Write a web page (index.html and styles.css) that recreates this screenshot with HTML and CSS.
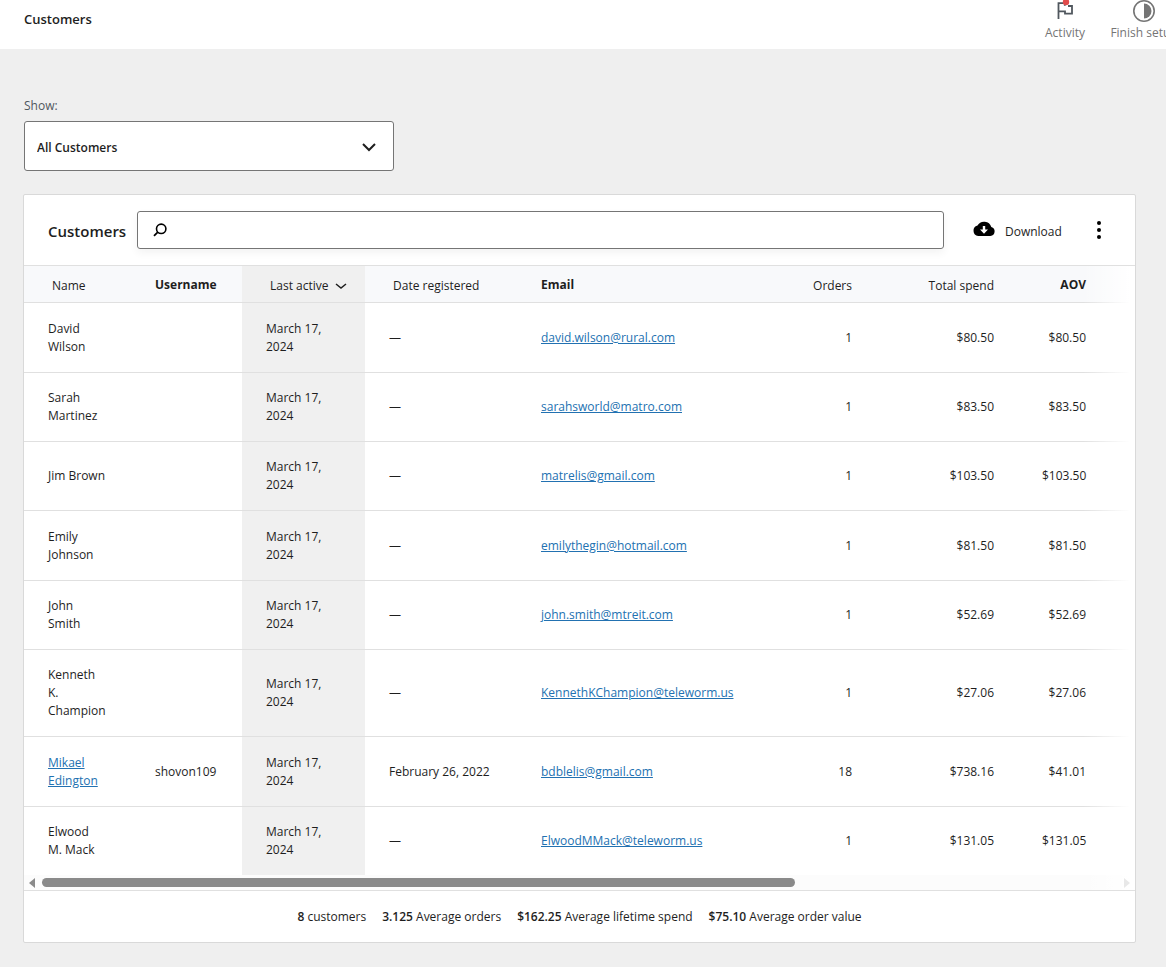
FILE: index.html
```html
<!DOCTYPE html>
<html lang="en">
<head>
<meta charset="utf-8">
<meta name="viewport" content="width=device-width, initial-scale=1">
<title>Customers</title>
<link rel="stylesheet" href="styles.css">
</head>
<body>
<header class="topbar">
  <h1 class="topbar-title">Customers</h1>
  <nav class="topbar-tabs" aria-label="Store activity">
    <button class="tab" type="button">
      <svg class="tab-icon" viewBox="0 0 24 24" aria-hidden="true">
        <path d="M5.500 20V4.200h6.300v2.500M5.500 12.400h6.500v2.300h7V7h-4" fill="none" stroke="#50575e" stroke-width="1.800"/>
        <circle cx="13" cy="3" r="3.200" fill="#e14b4b"/>
      </svg>
      <span>Activity</span>
    </button>
    <button class="tab" type="button">
      <svg class="tab-icon" viewBox="0 0 24 24" aria-hidden="true">
        <circle cx="12" cy="12" r="10.200" fill="none" stroke="#757575" stroke-width="1.600"/>
        <path d="M12 4.500a7.500 7.500 0 0 1 0 15z" fill="#757575"/>
      </svg>
      <span>Finish setup</span>
    </button>
  </nav>
</header>

<main class="page">
  <div class="filter">
    <label class="filter-label" for="show">Show:</label>
    <div class="select-wrap">
      <select class="select" id="show">
        <option>All Customers</option>
        <option>Advanced Filters</option>
      </select>
      <svg class="select-arrow" viewBox="0 0 16 16" aria-hidden="true"><path d="M2 5l6 6 6-6" fill="none" stroke="#1e1e1e" stroke-width="2"/></svg>
    </div>
  </div>

  <section class="card">
    <div class="card-head">
      <h2 class="card-title">Customers</h2>
      <label class="search">
        <svg class="search-icon" viewBox="0 0 14 14" aria-hidden="true"><circle cx="8.200" cy="5.800" r="4.700" fill="none" stroke="#000" stroke-width="1.600"/><path d="M4.800 9.200L1 12.800" stroke="#000" stroke-width="1.800"/></svg>
        <input class="search-input" type="text" aria-label="Search customers">
      </label>
      <button class="download" type="button">
        <svg class="download-icon" viewBox="0 0 22 15" aria-hidden="true"><path d="M18.300 6A7.500 7.500 0 0 0 4.500 4.600 5.300 5.300 0 0 0 5.200 15h12.200A4.600 4.600 0 0 0 18.300 6z"/><path d="M9.800 5h2.400v3.500h2.800L11 12.700 7 8.500h2.800z" fill="#fff"/></svg>
        <span class="download-text">Download</span>
      </button>
      <button class="more" type="button" aria-label="Choose which values to display">
        <svg class="more-icon" viewBox="0 0 6 18" aria-hidden="true"><circle cx="3" cy="2" r="2"/><circle cx="3" cy="9" r="2"/><circle cx="3" cy="16" r="2"/></svg>
      </button>
    </div>

    <div class="table-area">
      <table class="table">
        <colgroup>
          <col class="c-name"><col class="c-user"><col class="c-active"><col class="c-date"><col><col class="c-orders"><col class="c-spend"><col class="c-aov"><col class="c-rest">
        </colgroup>
        <thead>
          <tr>
            <th><button class="sort" type="button">Name</button></th>
            <th>Username</th>
            <th class="sorted"><button class="sort" type="button">Last active<svg class="sort-icon" viewBox="0 0 12 12" aria-hidden="true"><path d="M1 4l5 4 5-4" fill="none" stroke="#1e1e1e" stroke-width="1.500"/></svg></button></th>
            <th><button class="sort" type="button">Date registered</button></th>
            <th>Email</th>
            <th class="num"><button class="sort" type="button">Orders</button></th>
            <th class="num"><button class="sort" type="button">Total spend</button></th>
            <th class="num">AOV</th>
            <td></td>
          </tr>
        </thead>
        <tbody>
          <tr><td>David Wilson</td><td></td><td class="sorted">March 17, 2024</td><td>—</td><td><a href="#">david.wilson@rural.com</a></td><td class="num">1</td><td class="num">$80.50</td><td class="num">$80.50</td><td></td></tr>
          <tr><td>Sarah Martinez</td><td></td><td class="sorted">March 17, 2024</td><td>—</td><td><a href="#">sarahsworld@matro.com</a></td><td class="num">1</td><td class="num">$83.50</td><td class="num">$83.50</td><td></td></tr>
          <tr><td>Jim Brown</td><td></td><td class="sorted">March 17, 2024</td><td>—</td><td><a href="#">matrelis@gmail.com</a></td><td class="num">1</td><td class="num">$103.50</td><td class="num">$103.50</td><td></td></tr>
          <tr><td>Emily Johnson</td><td></td><td class="sorted">March 17, 2024</td><td>—</td><td><a href="#">emilythegin@hotmail.com</a></td><td class="num">1</td><td class="num">$81.50</td><td class="num">$81.50</td><td></td></tr>
          <tr><td>John<br>Smith</td><td></td><td class="sorted">March 17, 2024</td><td>—</td><td><a href="#">john.smith@mtreit.com</a></td><td class="num">1</td><td class="num">$52.69</td><td class="num">$52.69</td><td></td></tr>
          <tr><td>Kenneth<br>K.<br>Champion</td><td></td><td class="sorted">March 17, 2024</td><td>—</td><td><a href="#">KennethKChampion@teleworm.us</a></td><td class="num">1</td><td class="num">$27.06</td><td class="num">$27.06</td><td></td></tr>
          <tr><td><a href="#">Mikael Edington</a></td><td>shovon109</td><td class="sorted">March 17, 2024</td><td>February 26, 2022</td><td><a href="#">bdblelis@gmail.com</a></td><td class="num">18</td><td class="num">$738.16</td><td class="num">$41.01</td><td></td></tr>
          <tr><td>Elwood<br>M. Mack</td><td></td><td class="sorted">March 17, 2024</td><td>—</td><td><a href="#">ElwoodMMack@teleworm.us</a></td><td class="num">1</td><td class="num">$131.05</td><td class="num">$131.05</td><td></td></tr>
        </tbody>
      </table>
      <div class="scrollbar" aria-hidden="true">
        <svg class="scroll-arrow" viewBox="0 0 6 10"><path d="M6 0v10L0 5z" fill="#8a8a8a"/></svg>
        <div class="scroll-track"><div class="scroll-thumb"></div></div>
        <svg class="scroll-arrow scroll-arrow-end" viewBox="0 0 6 10"><path d="M0 0v10l6-5z" fill="#e8e8e8"/></svg>
      </div>
    </div>

    <ul class="summary">
      <li><strong>8</strong> customers</li>
      <li><strong>3.125</strong> Average orders</li>
      <li><strong>$162.25</strong> Average lifetime spend</li>
      <li><strong>$75.10</strong> Average order value</li>
    </ul>
  </section>
</main>
</body>
</html>
```

FILE: styles.css
```css
* { box-sizing: border-box; }

body {
  margin: 0;
  background: #efefef;
  color: #1e1e1e;
  font: 12px/18px "Segoe UI", "Open Sans", "Noto Sans", sans-serif;
}

button, input, select { font: inherit; color: inherit; }
button { border: 0; background: none; padding: 0; }
svg { display: block; flex: none; }
a { color: #2271b1; }

.topbar {
  display: flex;
  justify-content: space-between;
  height: 49px;
  background: #fff;
  padding-left: 24px;
  overflow: hidden;
}
.topbar-title { margin: 10px 0 0; font-size: 13px; line-height: 18px; font-weight: 600; }
.topbar-tabs { display: flex; gap: 24px; margin: -1px -12px 0 0; }
.tab {
  display: flex;
  flex-direction: column;
  align-items: center;
  justify-content: flex-start;
  gap: 1px;
  min-width: 42px;
  white-space: nowrap;
  color: #757575;
}
.tab:last-child { min-width: 68px; }
.tab-icon { width: 24px; height: 24px; }

.page { padding: 48px 30px 24px 23px; }

.filter { max-width: 371px; padding-left: 1px; margin-bottom: 23px; }
.filter-label { display: block; margin-bottom: 6px; color: #50575e; }
.select-wrap { position: relative; }
.select {
  display: block;
  width: 100%;
  height: 50px;
  padding: 4px 48px 0 12px;
  appearance: none;
  background: #fff;
  border: 1px solid #757575;
  border-radius: 3px;
  font-weight: 600;
}
.select-arrow { position: absolute; right: 17px; top: 18px; width: 16px; height: 16px; pointer-events: none; }

.card { background: #fff; border: 1px solid #d9d9d9; border-radius: 2px; }
.card-head { display: flex; align-items: center; padding: 16px 33px 16px 24px; }
.card-title { flex: none; min-width: 77px; margin: 2px 11px 0 0; font-size: 15px; line-height: 20px; font-weight: 600; }
.search {
  display: flex;
  align-items: center;
  flex: 1;
  height: 38px;
  padding: 0 15px;
  gap: 8px;
  border: 1px solid #757575;
  border-radius: 3px;
  box-shadow: 0 4px 8px rgba(0, 0, 0, 0.05);
}
.search-icon { width: 14px; height: 14px; }
.search-input { flex: 1; min-width: 0; border: 0; outline: 0; background: none; }
.download { display: flex; align-items: center; gap: 10px; margin: 0 33px 0 29px; }
.download-icon { width: 22px; height: 15px; margin-bottom: 3px; }
.download-text { min-width: 58px; padding-top: 3px; text-align: left; }
.more-icon { width: 6px; height: 18px; }

.table-area { position: relative; overflow: hidden; border-top: 1px solid #e0e0e0; border-bottom: 1px solid #e0e0e0; }
.table-area::after {
  content: "";
  position: absolute;
  top: 0;
  right: 0;
  bottom: 0;
  width: 52px;
  background: linear-gradient(to right, rgba(255, 255, 255, 0), #fff 90%);
  pointer-events: none;
}
.table { width: 100%; table-layout: fixed; border-collapse: separate; border-spacing: 0; }
.c-name { width: 107px; }
.c-user { width: 111px; }
.c-active { width: 123px; }
.c-date { width: 152px; }
.c-orders { width: 128px; }
.c-spend { width: 142px; }
.c-aov { width: 92px; }
.c-rest { width: 25px; }

.table th, .table td { text-align: left; border-bottom: 1px solid #e0e0e0; }
.table td { padding: 16px 24px; }
.table td:first-child { padding-right: 22px; }
.table tr > td:last-child { padding: 0; }
.table th { height: 37px; padding: 1px 20px 0 24px; font-weight: 700; white-space: nowrap; }
.table thead { background: #f8f9fb; }
.table .num { text-align: right; padding-right: 24px; }
.table .sorted { background: #f0f0f0; }
.table tbody tr:nth-child(3n + 1) { height: 70px; }
.table tbody tr:last-child td { border-bottom: 0; }
.sort { display: inline-flex; align-items: center; gap: 6px; padding: 2px 0 0 4px; font-weight: 400; vertical-align: middle; }
.num .sort { padding-left: 0; }
.sort-icon { width: 12px; height: 12px; }

.scrollbar { display: flex; align-items: center; gap: 7px; height: 15px; padding: 0 5px; background: #fcfcfc; }
.scroll-arrow { width: 6px; height: 10px; }
.scroll-arrow-end { position: relative; z-index: 1; }
.scroll-track { flex: 1; }
.scroll-thumb { width: 70%; height: 9px; border-radius: 5px; background: #8a8a8a; }

.summary { display: flex; justify-content: center; flex-wrap: wrap; gap: 16px; margin: 0; padding: 17px 16px 16px; list-style: none; }
.summary strong { font-weight: 600; }
```
